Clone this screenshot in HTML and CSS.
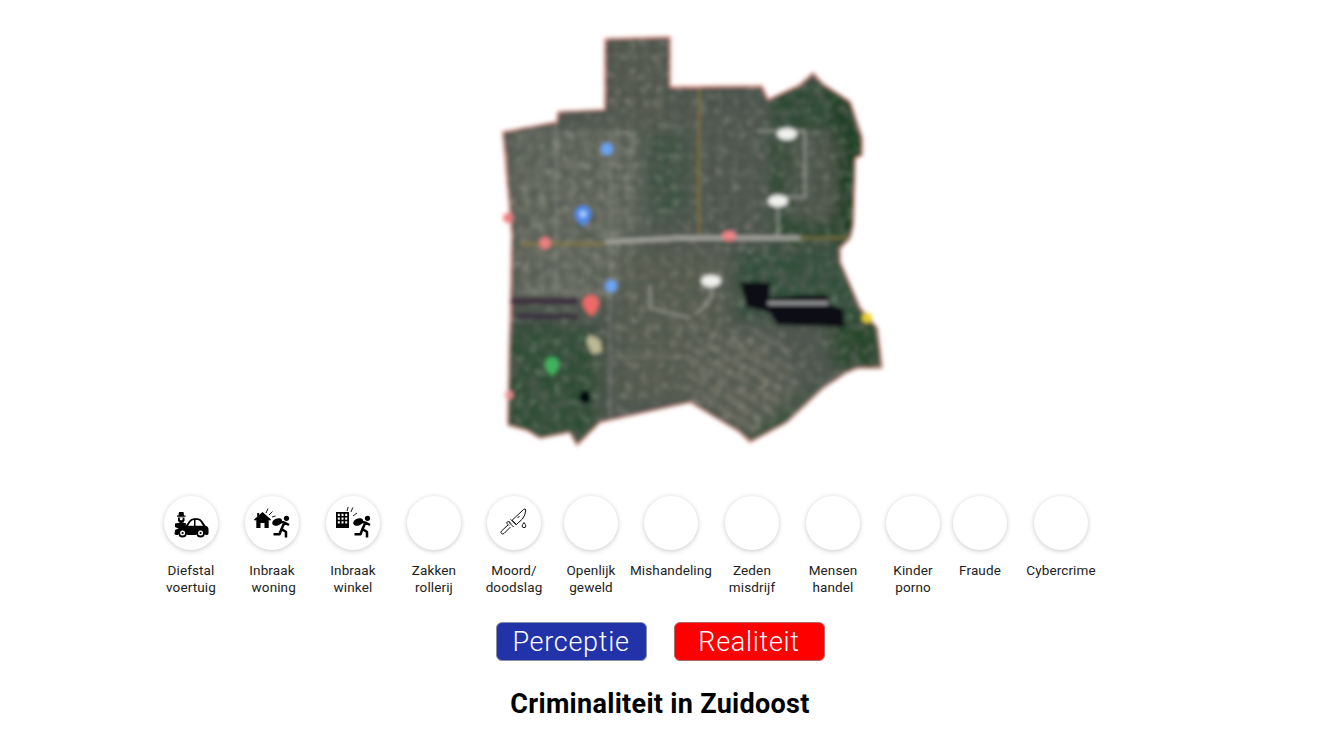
FILE: index.html
```html
<!DOCTYPE html>
<html lang="nl">
<head>
<meta charset="utf-8">
<title>Criminaliteit in Zuidoost</title>
<link rel="stylesheet" href="styles.css">
</head>
<body>
<main class="page">
  <div class="map">
    <svg class="map-svg" width="420" height="470" viewBox="480 0 420 470" aria-hidden="true">
      <defs>
        <clipPath id="area"><polygon points="605,39 670,37 670,87 762,86 768,100 800,85 813,73 823,84 850,102 862,138 862,155 855,158 853,225 850,238 840,248 840,262 860,308 877,328 882,368 857,368 847,372 823,388 787,422 750,442 740,432 690,402 600,422 577,445 570,432 540,438 527,430 508,425 512,235 503,132 557,122 558,112 605,110"/></clipPath>
        <pattern id="blocks" width="15" height="11" patternUnits="userSpaceOnUse">
          <path d="M0 .5H15M.5 0V11" stroke="#8d8f84" stroke-width="1.400" fill="none"/>
          <path d="M8 0V11" stroke="#24302a" stroke-width="1.200" fill="none"/>
        </pattern>
        <pattern id="blocks-se" width="17" height="12" patternUnits="userSpaceOnUse" patternTransform="rotate(32)">
          <path d="M0 .5H17M.5 0V12" stroke="#9a9a8a" stroke-width="1.500" fill="none"/>
          <path d="M0 6H17" stroke="#2a332c" stroke-width="1.200" fill="none"/>
        </pattern>
        <filter id="noise" x="0" y="0" width="100%" height="100%">
          <feTurbulence type="fractalNoise" baseFrequency="0.1" numOctaves="2" seed="7"/>
          <feColorMatrix type="matrix" values="0 0 0 0 0.08  0 0 0 0 0.1  0 0 0 0 0.08  3.500 0 0 0 -1.550"/>
        </filter>
        <filter id="noise-light" x="0" y="0" width="100%" height="100%">
          <feTurbulence type="fractalNoise" baseFrequency="0.13" numOctaves="2" seed="31"/>
          <feColorMatrix type="matrix" values="0 0 0 0 0.6  0 0 0 0 0.6  0 0 0 0 0.52  0 4 0 0 -2.100"/>
        </filter>
        <filter id="soft" x="-5%" y="-5%" width="110%" height="110%"><feGaussianBlur stdDeviation="2.300"/></filter>
        <filter id="wide" x="-20%" y="-20%" width="140%" height="140%"><feGaussianBlur stdDeviation="7"/></filter>
      </defs>
      <g filter="url(#soft)">
        <polygon points="605,39 670,37 670,87 762,86 768,100 800,85 813,73 823,84 850,102 862,138 862,155 855,158 853,225 850,238 840,248 840,262 860,308 877,328 882,368 857,368 847,372 823,388 787,422 750,442 740,432 690,402 600,422 577,445 570,432 540,438 527,430 508,425 512,235 503,132 557,122 558,112 605,110" fill="#46504a" stroke="#f09c90" stroke-width="2"/>
        <g clip-path="url(#area)">
          <g filter="url(#wide)">
            <rect x="560" y="100" width="300" height="340" fill="#505450"/>
            <rect x="770" y="85" width="95" height="160" fill="#2c4a30"/>
            <rect x="830" y="90" width="40" height="150" fill="#1c3c22"/>
            <rect x="790" y="130" width="45" height="90" fill="#4d5448"/>
            <rect x="510" y="130" width="130" height="170" fill="#666a5e"/>
            <rect x="610" y="40" width="60" height="90" fill="#54594e"/>
            <rect x="500" y="325" width="100" height="120" fill="#2f4e36"/>
            <rect x="735" y="250" width="130" height="70" fill="#31503a"/>
            <rect x="830" y="320" width="55" height="50" fill="#28462a"/>
            <rect x="620" y="250" width="110" height="150" fill="#585c50"/>
            <polygon points="690,330 770,335 800,390 745,440 690,400" fill="#626458"/>
            <rect x="645" y="130" width="45" height="90" fill="#3d5242"/>
            <polygon points="790,400 830,380 770,440 745,440" fill="#2f5034"/>
          </g>
          <rect x="605" y="39" width="70" height="70" fill="url(#blocks)" opacity=".28"/>
          <rect x="515" y="125" width="120" height="170" fill="url(#blocks)" opacity=".32"/>
          <rect x="610" y="90" width="160" height="145" fill="url(#blocks)" opacity=".22"/>
          <rect x="785" y="125" width="55" height="100" fill="url(#blocks)" opacity=".3"/>
          <rect x="615" y="250" width="110" height="150" fill="url(#blocks)" opacity=".2"/>
          <polygon points="685,325 770,330 805,375 750,438 685,400" fill="url(#blocks-se)" opacity=".42"/>
          <rect x="490" y="30" width="400" height="420" filter="url(#noise-light)" opacity=".3"/>
          <rect x="490" y="30" width="400" height="420" filter="url(#noise)" opacity=".8"/>
          <path class="road-olive" d="M699 88V240M520 244H605M800 238H852"/>
          <path class="road-grey" d="M605 242L680 238H800"/>
          <path class="road-thin" d="M757 131H805V197H776M778 205V238M650 285V308L690 318M711 286Q716 300 695 314"/>
          <path class="road-thin dim" d="M556 122V290M610 130V420M610 357H690M780 428L838 372M515 292H610"/>
          <polygon points="740,282 770,282 770,298 807,295 827,295 830,305 843,308 845,327 777,325 770,313 747,307" fill="#070c16"/>
          <rect x="768" y="302" width="60" height="2.500" fill="#bdbdbd"/>
          <rect x="506" y="298" width="72" height="6" fill="#3b2a3e"/>
          <rect x="516" y="314" width="62" height="5" fill="#3b2a3e"/>
          <polygon points="590,335 600,340 602,352 592,354 586,340" fill="#bdb894"/>
          <ellipse cx="585" cy="397" rx="6" ry="7" fill="#06090a"/>
        </g>
        <ellipse cx="787" cy="134" rx="10" ry="6" fill="#f1f1ef"/>
        <ellipse cx="778" cy="201" rx="10" ry="6" fill="#f1f1ef"/>
        <ellipse cx="711" cy="281" rx="10" ry="6" fill="#f1f1ef"/>
        <circle cx="607" cy="149" r="6" fill="#6aa5f5"/>
        <circle cx="611" cy="286" r="6" fill="#6aa5f5"/>
        <path d="M583 206a8 8 0 0 1 8 8q0 5-8 12q-8-7-8-12a8 8 0 0 1 8-8z" fill="#4b8df0"/>
        <circle cx="583" cy="214" r="3" fill="#bcd6fb"/>
        <path d="M591 295a8 8 0 0 1 8 8q0 6-8 13q-8-7-8-13a8 8 0 0 1 8-8z" fill="#ee6b69"/>
        <path d="M552 357a7 7 0 0 1 7 7q0 6-7 12q-7-6-7-12a7 7 0 0 1 7-7z" fill="#3fb35e"/>
        <circle cx="508" cy="218" r="5" fill="#ef7f80"/>
        <circle cx="545" cy="243" r="6" fill="#e97f80"/>
        <ellipse cx="729" cy="236" rx="7" ry="5" fill="#f08488"/>
        <circle cx="509" cy="395" r="4" fill="#ee9090"/>
        <circle cx="867" cy="318" r="5" fill="#e8cf2c"/>
      </g>
    </svg>
  </div>

  <ul class="crimes">
    <li class="crime">
      <span class="disc">
        <svg class="icon" viewBox="0 0 54 54" aria-hidden="true">
          <path d="M13 19.500h1.500l.5-3.500h4.500l.5 3.500h1.500v1.300h-8.500z"/>
          <path d="M14 21.500h6.500v3q-.4 2.500-3.200 2.500t-3.300-2.500z"/>
          <circle class="cut-fill" cx="17.200" cy="22.800" r="1.500"/>
          <path d="M11 27.500l6-1 5 .8-.5 4-6 1.800-4.500-2z"/>
          <path d="M11 34l8-3.500 2.500-.5 3.500-5q1.800-2.600 5-2.700h3.500q3 .2 5 3l3 4.500q3 .7 3 3.500v4.200q-.1 1.300-1.500 1.500h-1.500a5 5 0 0 0-9.600 0H23.400a5 5 0 0 0-9.600 0H12q-1.500-.3-1.500-1.500z"/>
          <path class="cut" d="M24 29.800l2.500-3.900q1.400-2 3.500-2v5.900zM31.500 23.900h2q2 .1 3 1.800l2.500 4.100h-7.500z"/>
          <circle cx="18.600" cy="37" r="4.500"/><circle class="cut-fill" cx="18.600" cy="37" r="2.500"/>
          <circle cx="36.600" cy="37" r="4.500"/><circle class="cut-fill" cx="36.600" cy="37" r="2.500"/>
          <circle cx="18.600" cy="37" r="1.100"/><circle cx="36.600" cy="37" r="1.100"/>
        </svg>
      </span>
      <span class="label">Diefstal<br>voertuig</span>
    </li>
    <li class="crime">
      <span class="disc">
        <svg class="icon" viewBox="0 0 54 54" aria-hidden="true">
          <path d="M17.500 16l8.500 7.500-1 1.200-1.300-1V32h-4.200v-5h-4v5h-4.200v-8.300l-1.300 1-1-1.200 3.200-2.800V17h2v2z"/>
          <path class="line" d="M21 17l2-4.500M24 19l3.500-3.500M27 21l3.500-1"/>
          <circle cx="41.500" cy="22.300" r="2.600"/>
          <ellipse cx="32.200" cy="26" rx="5.200" ry="3.500" transform="rotate(-22 32.200 26)"/>
          <path class="limb" d="M39.500 26.500L36.500 33M36.500 33L41 36V41.500M36.500 33L34.500 38.300H28.500M39.500 26.500L44 29M39.500 26.500L36 26"/>
        </svg>
      </span>
      <span class="label">Inbraak<br>&nbsp;woning</span>
    </li>
    <li class="crime">
      <span class="disc">
        <svg class="icon" viewBox="0 0 54 54" aria-hidden="true">
          <path fill-rule="evenodd" d="M10 16h13v16H10zM11.800 17.800v2.300h2v-2.300zm3.700 0v2.300h2v-2.300zm3.700 0v2.300h2v-2.300zM11.800 21.500v2.300h2v-2.300zm3.700 0v2.300h2v-2.300zm3.700 0v2.300h2v-2.300zM11.800 25.200v2.300h2v-2.300zm3.700 0v2.300h2v-2.300zm3.700 0v2.300h2v-2.300z"/>
          <path class="line" d="M21 15l1.200-4M25 16l1.800-4.500M27 20l4-3"/>
          <circle cx="41.500" cy="22.300" r="2.600"/>
          <ellipse cx="32.200" cy="26" rx="5.200" ry="3.500" transform="rotate(-22 32.200 26)"/>
          <path class="limb" d="M39.500 26.500L36.500 33M36.500 33L41 36V41.500M36.500 33L34.500 38.300H28.500M39.500 26.500L44 29M39.500 26.500L36 26"/>
        </svg>
      </span>
      <span class="label">Inbraak<br>winkel</span>
    </li>
    <li class="crime gap-26">
      <span class="disc"></span>
      <span class="label">Zakken<br>rollerij</span>
    </li>
    <li class="crime gap-23">
      <span class="disc">
        <svg class="icon" viewBox="0 0 54 54" aria-hidden="true">
          <g class="outline">
            <path d="M36.800 13.300q1.500-1 2 .7-.4 5.400-3.400 9l-6 5.500-4.300-4.300z"/>
            <path d="M23.600 23.300l5.800 5.800M21.600 26l5 5"/>
            <path d="M24 27.500l-2.500-2.500-2 2 2.500 2.500M21 29l-6.500 6q-1.200 1.500 0 2.500t2.500 0L23.500 31"/>
            <path d="M32.500 20l-2 2"/>
            <path d="M37 26.500q1.800 2.300 1.800 3.400a1.800 1.800 0 0 1-3.600 0q0-1.100 1.800-3.400z"/>
          </g>
        </svg>
      </span>
      <span class="label">Moord/<br>doodslag</span>
    </li>
    <li class="crime gap-26">
      <span class="disc"></span>
      <span class="label">Openlijk<br>geweld</span>
    </li>
    <li class="crime">
      <span class="disc"></span>
      <span class="label">Mishandeling</span>
    </li>
    <li class="crime">
      <span class="disc"></span>
      <span class="label">Zeden<br>misdrijf</span>
    </li>
    <li class="crime gap-26">
      <span class="disc"></span>
      <span class="label">Mensen<br>handel</span>
    </li>
    <li class="crime gap-13">
      <span class="disc"></span>
      <span class="label">Kinder<br>porno</span>
    </li>
    <li class="crime">
      <span class="disc"></span>
      <span class="label">Fraude</span>
    </li>
    <li class="crime">
      <span class="disc"></span>
      <span class="label">Cybercrime</span>
    </li>
  </ul>

  <div class="modes">
    <button class="mode mode-blue" type="button">Perceptie</button>
    <button class="mode mode-red" type="button">Realiteit</button>
  </div>

  <h1 class="title">Criminaliteit in Zuidoost</h1>
</main>
</body>
</html>
```

FILE: styles.css
```css
* { box-sizing: border-box; }

html, body {
  margin: 0;
  background: #fff;
}

body {
  font-family: "Roboto", "Liberation Sans", sans-serif;
  color: #111;
  overflow: hidden;
}

.page {
  display: flex;
  flex-direction: column;
  height: 741px;
}

.map {
  display: flex;
  justify-content: center;
  height: 470px;
  padding-left: 60px;
}

.map-svg {
  display: block;
}

.road-olive { fill: none; stroke: #8c7a3a; stroke-width: 3; opacity: .75; }
.road-grey { fill: none; stroke: #a9a9a2; stroke-width: 4; }
.road-thin { fill: none; stroke: #a5a6a0; stroke-width: 2.200; opacity: .8; }
.road-thin.dim { opacity: .35; }

.crimes {
  display: flex;
  list-style: none;
  margin: 26px 0 0 164px;
  padding: 0;
  height: 100px;
}

.crime {
  flex: none;
  width: 54px;
  margin-right: 27px;
  display: flex;
  flex-direction: column;
  align-items: center;
}

.gap-26 { margin-right: 26px; }
.gap-23 { margin-right: 23px; }
.gap-13 { margin-right: 13px; }

.disc {
  flex: none;
  display: block;
  width: 54px;
  height: 54px;
  border-radius: 50%;
  background: #fff;
  box-shadow: 0 1px 5px rgba(0, 0, 0, .22);
}

.icon {
  display: block;
  width: 54px;
  height: 54px;
  fill: #000;
}

.cut { fill: #fff; }
.cut-fill { fill: #fff; }
.line { fill: none; stroke: #000; stroke-width: .9; }
.limb { fill: none; stroke: #000; stroke-width: 2.500; stroke-linejoin: round; }
.outline { fill: none; stroke: #111; stroke-width: 1; stroke-linejoin: round; }

.label {
  margin-top: 12px;
  font-size: 13.500px;
  letter-spacing: .12px;
  line-height: 17px;
  text-align: center;
  white-space: nowrap;
  color: #222;
}

.modes {
  display: flex;
  justify-content: center;
  gap: 27px;
  margin-top: 26px;
}

.mode {
  width: 151px;
  height: 39px;
  padding: 2px 0 0;
  border: 1px solid #8a8fa8;
  border-radius: 6px;
  font: 300 27px/1 "Roboto", "Liberation Sans", sans-serif;
  letter-spacing: .7px;
  color: #fff;
}

.mode-blue { background: #2233aa; }
.mode-red { background: #ff0000; border-color: #b06a6a; }

.title {
  margin: 25px 0 0;
  text-align: center;
  font-size: 27px;
  line-height: 36px;
  font-weight: 700;
  letter-spacing: .3px;
  color: #000;
}
```
